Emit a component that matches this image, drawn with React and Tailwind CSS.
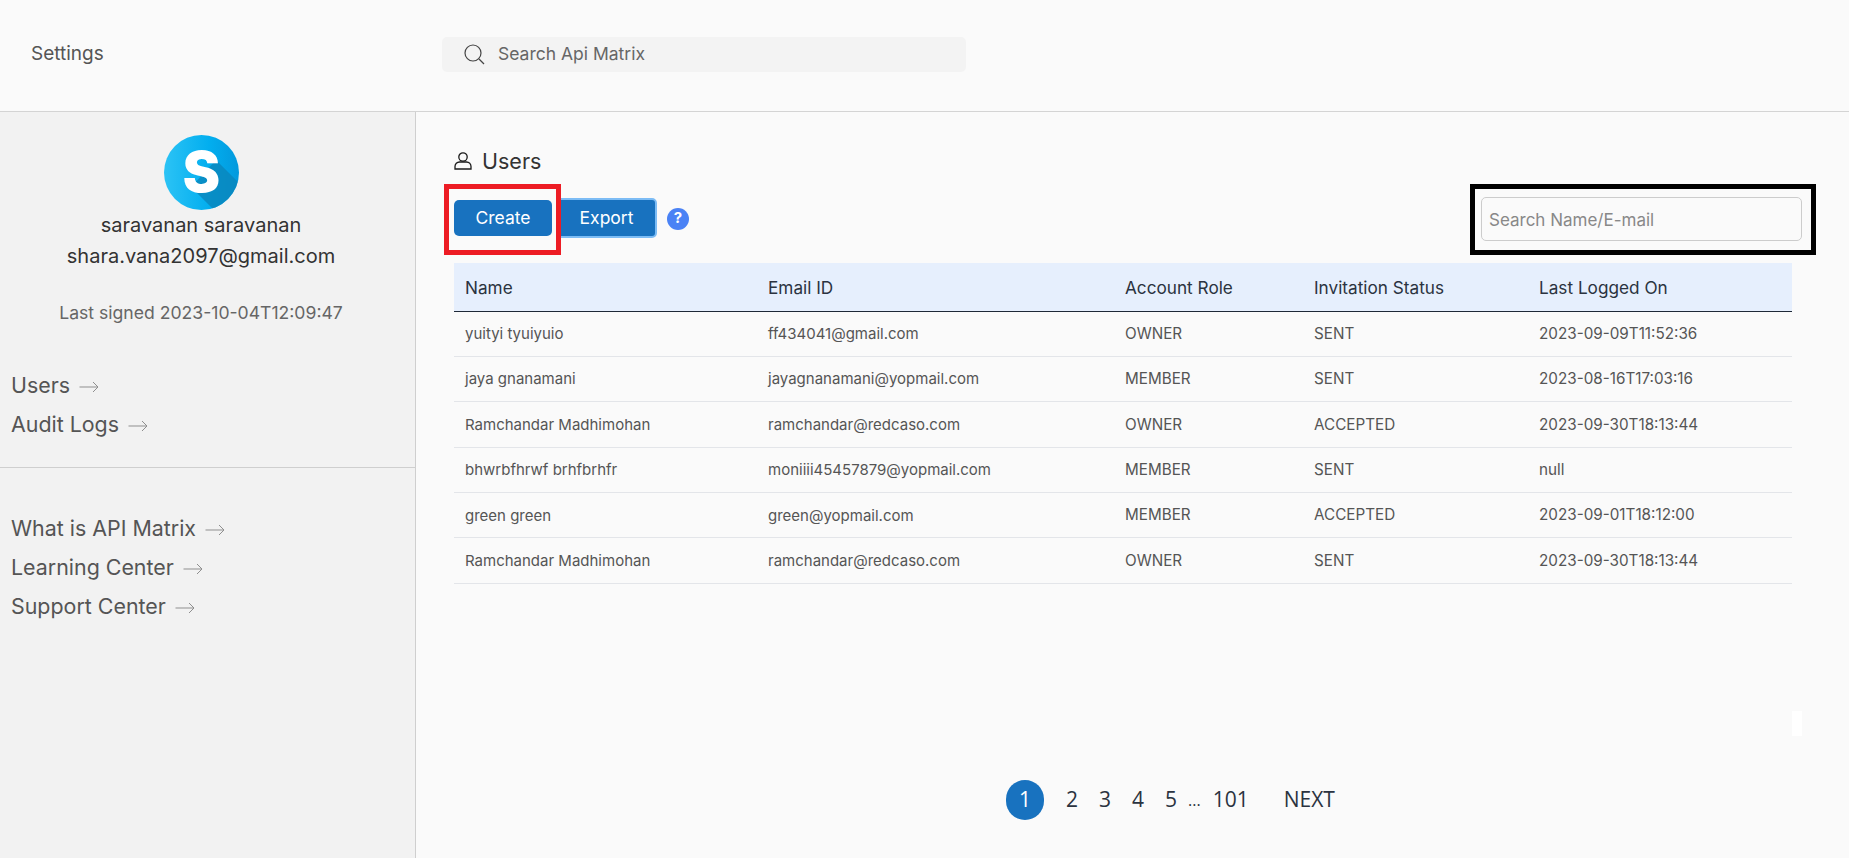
import React from "react";

const rows = [
  ["yuityi tyuiyuio", "ff434041@gmail.com", "OWNER", "SENT", "2023-09-09T11:52:36"],
  ["jaya gnanamani", "jayagnanamani@yopmail.com", "MEMBER", "SENT", "2023-08-16T17:03:16"],
  ["Ramchandar Madhimohan", "ramchandar@redcaso.com", "OWNER", "ACCEPTED", "2023-09-30T18:13:44"],
  ["bhwrbfhrwf brhfbrhfr", "moniiii45457879@yopmail.com", "MEMBER", "SENT", "null"],
  ["green green", "green@yopmail.com", "MEMBER", "ACCEPTED", "2023-09-01T18:12:00"],
  ["Ramchandar Madhimohan", "ramchandar@redcaso.com", "OWNER", "SENT", "2023-09-30T18:13:44"],
];

function Arrow() {
  return (
    <svg width="20" height="12" viewBox="0 0 20 12" fill="none" stroke="#8f8f8f" strokeWidth="1" className="ml-[9px] mt-[3px] shrink-0">
      <path d="M0.5 6H19M14 1l5 5-5 5" />
    </svg>
  );
}

function NavLink({ label }) {
  return (
    <div className="flex items-center text-[21.4px] leading-[26px] text-[#555555]">
      <span>{label}</span>
      <Arrow />
    </div>
  );
}

function Avatar() {
  return (
    <svg width="75" height="75" viewBox="0 0 75 75">
      <defs>
        <linearGradient id="avatarFill" x1="0" y1="0" x2="1" y2="0">
          <stop offset="0" stopColor="#2cc3f5" />
          <stop offset="0.6" stopColor="#02aeef" />
          <stop offset="1" stopColor="#0399dd" />
        </linearGradient>
        <clipPath id="avatarClip"><circle cx="37.5" cy="37.5" r="37.5" /></clipPath>
      </defs>
      <circle cx="37.5" cy="37.5" r="37.5" fill="url(#avatarFill)" />
      <polygon points="52,25 85,58 60,85 27,52" fill="#0a86bb" opacity="0.8" clipPath="url(#avatarClip)" />
      <text x="37.5" y="57" textAnchor="middle" fontFamily="Inter, sans-serif" fontWeight="900" fontSize="56" fill="#ffffff">S</text>
    </svg>
  );
}

export default function App() {
  return (
    <div className="relative h-[858px] w-[1849px] overflow-hidden bg-[#fafafa] font-['Inter',sans-serif]">
      <header className="flex h-[112px] items-center border-b border-[#d4d4d4] pb-[2px]">
        <div className="w-[442px] pl-[31px] text-[19px] text-[#555555]">Settings</div>
        <div className="flex h-[35px] w-[524px] items-center rounded-[5px] bg-[#f3f3f3] pl-[22px]">
          <svg width="21" height="21" viewBox="0 0 21 21" fill="none" stroke="#444444" strokeWidth="1.2">
            <circle cx="9" cy="9" r="8" />
            <path d="M15 15l5 5" />
          </svg>
          <span className="ml-[13px] text-[17.5px] text-[#666666]">Search Api Matrix</span>
        </div>
      </header>

      <div className="flex h-[746px]">
        <aside className="w-[416px] shrink-0 border-r border-[#cfcfcf] bg-[#f2f2f2]">
          <div className="flex flex-col items-center pr-[13px] pt-[23px]">
            <Avatar />
            <div className="text-[20px] leading-[31px] text-[#333333]">saravanan saravanan</div>
            <div className="text-[20px] leading-[31px] text-[#333333]">shara.vana2097@gmail.com</div>
            <div className="mt-[25px] text-[17.6px] leading-[31px] text-[#666666]">Last signed 2023-10-04T12:09:47</div>
          </div>
          <div className="mt-[44px] flex h-[95px] flex-col gap-[13px] pl-[11px]">
            <NavLink label="Users" />
            <NavLink label="Audit Logs" />
          </div>
          <div className="border-t border-[#cfcfcf]" />
          <div className="mt-[47px] flex flex-col gap-[13px] pl-[11px]">
            <NavLink label="What is API Matrix" />
            <NavLink label="Learning Center" />
            <NavLink label="Support Center" />
          </div>
        </aside>

        <main className="flex-1 pl-[38px] pr-[33px]">
          <div className="mt-[31px] flex h-[36px] items-center text-[#333333]">
            <svg width="18" height="18" viewBox="0 0 18 18" fill="none" stroke="#1a1a1a" strokeWidth="1.3" className="shrink-0">
              <circle cx="9" cy="5" r="4.2" />
              <path d="M1 17v-2.5a4.5 4.5 0 0 1 4.5-4.5h7a4.5 4.5 0 0 1 4.5 4.5V17z" />
            </svg>
            <span className="ml-[10px] text-[21.5px]">Users</span>
          </div>
          <div className="mt-[5px] flex items-center justify-between">
            <div className="flex items-center">
              <div className="relative z-10 -ml-[10px] h-[71px] w-[117px] border-[5px] border-[#ed1c24] pl-[5px] pt-[11px]">
                <button className="h-[36px] w-[98px] rounded-[5px] bg-[#1872bf] text-[17.5px] text-white">Create</button>
              </div>
              <button className="-ml-[5px] -mt-[3px] h-[40px] w-[101px] rounded-[5px] border-2 border-[#7cbcf5] bg-[#1872bf] text-[17.5px] text-white">Export</button>
              <div className="-mt-[2px] ml-[10px] flex h-[22px] w-[22px] items-center justify-center rounded-full bg-[#4a82f5] text-[15px] font-bold text-white">?</div>
            </div>
            <div className="h-[71px] w-[346px] border-[5px] border-black pl-[6px] pt-[8px]">
              <input
                placeholder="Search Name/E-mail"
                className="h-[44px] w-[321px] rounded-[5px] border border-[#cccccc] bg-transparent px-[7px] pt-[2px] text-[17px] outline-none placeholder:text-[#888888]"
              />
            </div>
          </div>

          <table className="mt-[8px] w-[1338px] table-fixed border-collapse">
            <colgroup>
              <col className="w-[303px]" />
              <col className="w-[357px]" />
              <col className="w-[189px]" />
              <col className="w-[225px]" />
              <col className="w-[264px]" />
            </colgroup>
            <thead>
              <tr className="h-[48px] border-b border-[#1f2937] bg-[#e6effd] text-left">
                {["Name", "Email ID", "Account Role", "Invitation Status", "Last Logged On"].map((h) => (
                  <th key={h} className="px-[11px] pt-[2px] text-[17.2px] font-normal text-[#2b3340]">{h}</th>
                ))}
              </tr>
            </thead>
            <tbody>
              {rows.map((r, i) => (
                <tr key={i} className="h-[45.4px] border-b border-[#e3e5e9]">
                  {r.map((c, j) => (
                    <td key={j} className={j < 2 ? "px-[11px] pt-[1px] text-[15px] text-[#555555]" : "px-[11px] pt-[1px] text-[15.25px] text-[#555555]"}>{c}</td>
                  ))}
                </tr>
              ))}
            </tbody>
          </table>

          <nav className="mt-[196px] flex items-center pl-[552px] font-['Open_Sans',sans-serif] text-[21px] text-[#2b3340]">
            <span className="flex h-[40px] w-[38px] items-center justify-center rounded-full bg-[#1872bf] text-white">1</span>
            <span className="ml-[22px]">2</span>
            <span className="ml-[21px]">3</span>
            <span className="ml-[21px]">4</span>
            <span className="ml-[21px]">5</span>
            <span className="ml-[11px] text-[16px]">...</span>
            <span className="ml-[12px]">101</span>
            <span className="ml-[35px]">NEXT</span>
          </nav>
        </main>
      </div>

      <div className="absolute left-[1792px] top-[711px] h-[25px] w-[10px] bg-white" />
    </div>
  );
}
